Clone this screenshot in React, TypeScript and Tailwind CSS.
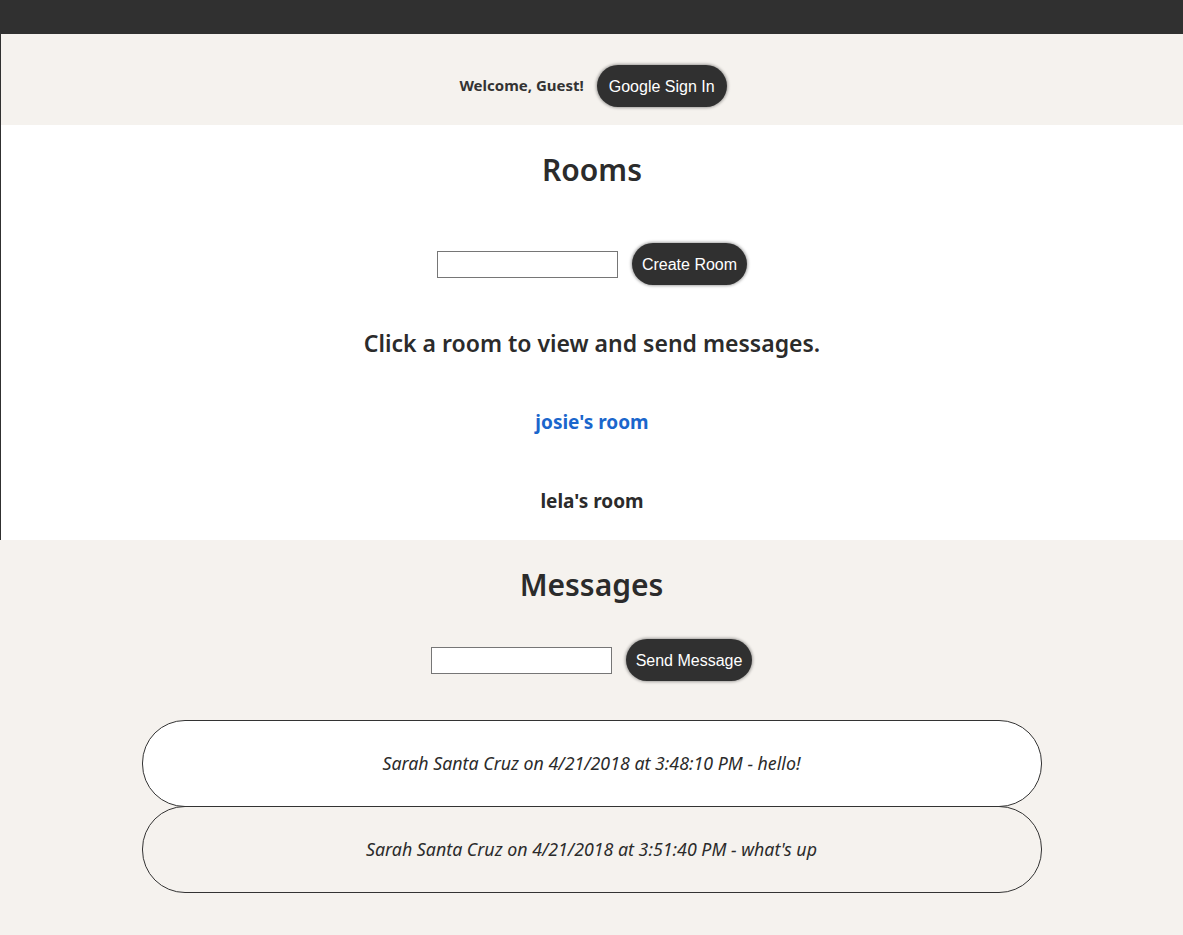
import React from "react";

const font = { fontFamily: "'Noto Sans', Lato, sans-serif" };

function PillButton({ children, wide }: { children: React.ReactNode; wide?: boolean }) {
  return (
    <button
      className={
        wide
          ? "h-[42px] rounded-full bg-[#303030] px-[12px] pt-[2px] text-[16px] text-white shadow-[0_0_3px_1px_rgba(0,0,0,0.35)]"
          : "h-[42px] rounded-full bg-[#303030] px-[10px] pt-[2px] text-[16px] text-white shadow-[0_0_3px_1px_rgba(0,0,0,0.35)]"
      }
      style={{ fontFamily: "'Liberation Sans', Arial, sans-serif" }}
    >
      {children}
    </button>
  );
}

export default function App() {
  return (
    <div className="min-h-[935px] bg-[#f5f2ee] text-[#2b2b2b]" style={font}>
      <div className="border-l border-[#303030]">
        <div className="h-[34px] bg-[#303030]" />
        <div className="flex h-[91px] items-center justify-center gap-[13px] bg-[#f5f2ee] pt-[12px] pl-[2px]">
          <span className="text-[15px] font-bold text-[#333]">Welcome, Guest!</span>
          <PillButton wide>Google Sign In</PillButton>
        </div>
        <div className="flex h-[415px] flex-col items-center bg-white">
          <h2 className="mt-[27px] text-[30px] font-semibold leading-[36px]">Rooms</h2>
          <div className="mt-[55px] flex items-center gap-[14px]">
            <input className="h-[27px] w-[181px] border border-[#767676] bg-white" />
            <PillButton>Create Room</PillButton>
          </div>
          <h3 className="mt-[44px] text-[23px] font-semibold leading-[29px]">
            Click a room to view and send messages.
          </h3>
          <div className="mt-[52px] text-[19px] font-bold leading-[24px] text-[#1a66cc]">josie's room</div>
          <div className="mt-[55px] text-[19px] font-bold leading-[24px]">lela's room</div>
        </div>
      </div>
      <div className="flex flex-col items-center pb-[40px]">
        <h2 className="mt-[27px] text-[30px] font-semibold leading-[36px]">Messages</h2>
        <div className="mt-[36px] flex items-center gap-[14px]">
          <input className="h-[27px] w-[181px] border border-[#767676] bg-white" />
          <PillButton>Send Message</PillButton>
        </div>
        <div className="mt-[39px] flex w-[900px] flex-col">
          <div className="flex h-[87px] items-center justify-center rounded-[43px] border border-[#333] bg-white text-[17.8px] italic">
            Sarah Santa Cruz on 4/21/2018 at 3:48:10 PM - hello!
          </div>
          <div className="-mt-px flex h-[87px] items-center justify-center rounded-[43px] border border-[#333] text-[17.8px] italic">
            Sarah Santa Cruz on 4/21/2018 at 3:51:40 PM - what's up
          </div>
        </div>
      </div>
    </div>
  );
}
